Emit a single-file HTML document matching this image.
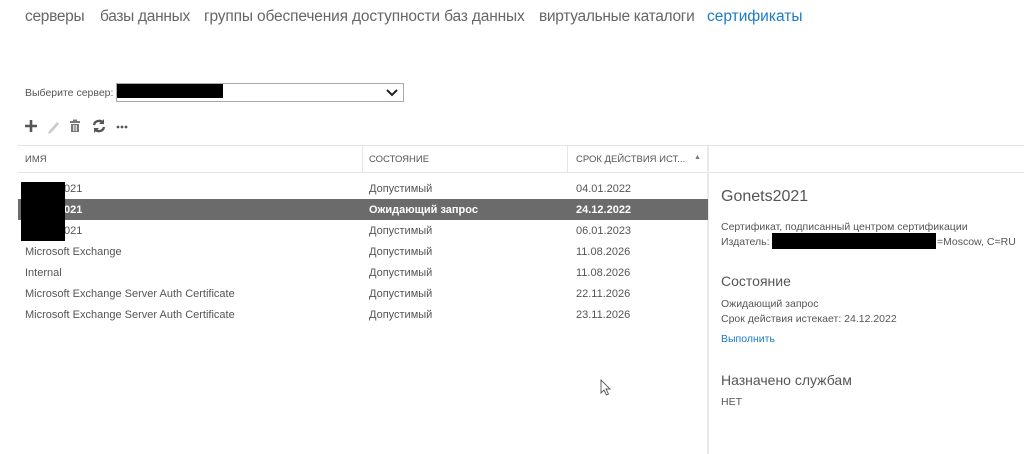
<!DOCTYPE html>
<html><head><meta charset="utf-8">
<style>
*{margin:0;padding:0;box-sizing:border-box}
body{width:1024px;height:454px;background:#fff;position:relative;overflow:hidden;font-family:"Liberation Sans","Noto Sans CJK SC",sans-serif;color:#444}
.a{position:absolute;white-space:nowrap}
.nav{top:8px;font-size:15.5px;color:#666;letter-spacing:-0.3px}
.sm{font-size:11px;color:#555}
.row{position:absolute;left:18px;width:690px;height:21px;font-size:11px;color:#555}
.row span{position:absolute;top:5px}
.c1{left:7px}.c2{left:351px}.c3{left:558px}.c0{left:46px}
.sel{background:#6b6b6b;color:#fff;font-weight:bold}
.h{font-size:14px;color:#555}
</style></head><body>
<div class="a nav" style="left:25px">серверы</div>
<div class="a nav" style="left:100px">базы данных</div>
<div class="a nav" style="left:204px;letter-spacing:-0.15px">группы обеспечения доступности баз данных</div>
<div class="a nav" style="left:539px">виртуальные каталоги</div>
<div class="a nav" style="left:707px;color:#1a7bc9;letter-spacing:0">сертификаты</div>

<div class="a sm" style="left:25px;top:87px;font-size:10.5px">Выберите сервер:</div>
<div class="a" style="left:116px;top:83px;width:288px;height:19px;border:1px solid #aaa"></div>
<div class="a" style="left:117px;top:84px;width:106px;height:14px;background:#000"></div>
<svg class="a" style="left:386px;top:88px" width="12" height="9" viewBox="0 0 12 9"><path d="M1 2 L6 7 L11 2" stroke="#222" stroke-width="2" fill="none"/></svg>

<svg class="a" style="left:24px;top:118px" width="110" height="16" viewBox="0 0 110 16">
<path d="M7 2v12M1 8h12" stroke="#555" stroke-width="2.6"/>
<path d="M25 13l8-9 2 2-8 9-3 1z" fill="#ccc"/>
<rect x="46" y="3" width="10" height="2" fill="#777"/><rect x="49" y="1.5" width="4" height="2" fill="#777"/>
<path d="M47 6h8v8h-8z" fill="#777"/><path d="M49.5 7v6M51 7v6M52.5 7v6" stroke="#fff" stroke-width="0.7"/>
<path d="M70 7a5 5 0 0 1 9-2M80 9a5 5 0 0 1-9 2" stroke="#555" stroke-width="2.4" fill="none"/>
<path d="M80 1v5h-5z M70 15v-5h5z" fill="#555"/>
<circle cx="94" cy="9" r="1.4" fill="#555"/><circle cx="98" cy="9" r="1.4" fill="#555"/><circle cx="102" cy="9" r="1.4" fill="#555"/>
</svg>

<div class="a" style="left:18px;top:145px;width:1006px;height:1px;background:#e4e4e4"></div>
<div class="a" style="left:18px;top:172px;width:1006px;height:1px;background:#e4e4e4"></div>
<div class="a" style="left:362px;top:146px;width:1px;height:26px;background:#e4e4e4"></div>
<div class="a" style="left:567px;top:146px;width:1px;height:26px;background:#e4e4e4"></div>
<div class="a" style="left:707px;top:146px;width:2px;height:308px;background:#eaeaea"></div>
<div class="a" style="left:25px;top:154px;font-size:9.5px;color:#555">ИМЯ</div>
<div class="a" style="left:369px;top:154px;font-size:9.5px;color:#555">СОСТОЯНИЕ</div>
<div class="a" style="left:576px;top:154px;font-size:9.5px;color:#555">СРОК ДЕЙСТВИЯ ИСТ...</div>
<div class="a" style="left:694px;top:154px;font-size:7px;color:#777">▲</div>

<div class="row" style="top:178px"><span class="c0">021</span><span class="c2">Допустимый</span><span class="c3">04.01.2022</span></div>
<div class="row sel" style="top:199px"><span class="c0">021</span><span class="c2">Ожидающий запрос</span><span class="c3">24.12.2022</span></div>
<div class="row" style="top:220px"><span class="c0">021</span><span class="c2">Допустимый</span><span class="c3">06.01.2023</span></div>
<div class="row" style="top:241px"><span class="c1">Microsoft Exchange</span><span class="c2">Допустимый</span><span class="c3">11.08.2026</span></div>
<div class="row" style="top:262px"><span class="c1">Internal</span><span class="c2">Допустимый</span><span class="c3">11.08.2026</span></div>
<div class="row" style="top:283px"><span class="c1">Microsoft Exchange Server Auth Certificate</span><span class="c2">Допустимый</span><span class="c3">22.11.2026</span></div>
<div class="row" style="top:304px"><span class="c1">Microsoft Exchange Server Auth Certificate</span><span class="c2">Допустимый</span><span class="c3">23.11.2026</span></div>
<div class="a" style="left:21px;top:182px;width:44px;height:59px;background:#000"></div>

<div class="a" style="left:721px;top:188px;font-size:16px;color:#555">Gonets2021</div>
<div class="a sm" style="left:721px;top:221px;font-size:10.5px">Сертификат, подписанный центром сертификации</div>
<div class="a sm" style="left:721px;top:236px;font-size:10.5px">Издатель:</div>
<div class="a" style="left:772px;top:233px;width:164px;height:16px;background:#000"></div>
<div class="a sm" style="left:937px;top:236px;font-size:10.5px">=Moscow, C=RU</div>
<div class="a h" style="left:721px;top:273px">Состояние</div>
<div class="a sm" style="left:721px;top:298px;font-size:10.5px">Ожидающий запрос</div>
<div class="a sm" style="left:721px;top:313px;font-size:10.5px">Срок действия истекает: 24.12.2022</div>
<div class="a sm" style="left:721px;top:333px;font-size:10.5px;color:#1a7bc9">Выполнить</div>
<div class="a h" style="left:721px;top:372px">Назначено службам</div>
<div class="a sm" style="left:721px;top:396px;font-size:10.5px">НЕТ</div>

<svg class="a" style="left:600px;top:379px" width="12" height="17" viewBox="0 0 12 17"><path d="M1 1v13l3-3 2.5 5 2-1-2.5-5h4z" fill="#fff" stroke="#555" stroke-width="0.9"/></svg>
</body></html>
